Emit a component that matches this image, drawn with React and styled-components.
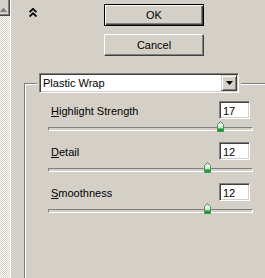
import React from 'react'
import styled, { createGlobalStyle } from 'styled-components'

const GlobalStyle = createGlobalStyle`
  html, body {
    margin: 0;
    padding: 0;
    background: #d4d0c8;
    overflow: hidden;
  }
  body {
    font-family: "Liberation Sans", Arial, sans-serif;
    font-size: 11px;
    color: #000;
  }
`

const Window = styled.div`
  display: flex;
  width: 265px;
  height: 278px;
  overflow: hidden;
  background: #d4d0c8;
`

const Strip = styled.div`
  display: flex;
  flex-direction: column;
  flex: none;
  width: 10px;
  border-right: 1px solid #fff;
  background: repeating-conic-gradient(#fff 0 25%, #d4d0c8 0 50%) 0 0 / 2px 2px;
`

const ScrollButton = styled.div`
  box-sizing: border-box;
  height: 16px;
  background: #d4d0c8;
  border-right: 1px solid #404040;
  border-bottom: 1px solid #404040;
  box-shadow: inset -1px -1px #808080;
  display: flex;
  align-items: flex-start;
  padding-top: 7px;
`

const Main = styled.div`
  display: flex;
  flex-direction: column;
  flex: 1;
  min-width: 0;
`

const TopBar = styled.div`
  display: flex;
  padding: 4px 0 0 18px;
`

const ChevronBox = styled.div`
  width: 75px;
  padding-top: 3px;
`

const ButtonCol = styled.div`
  display: flex;
  flex-direction: column;
  gap: 8px;
  width: 100px;
`

const Button = styled.button`
  box-sizing: border-box;
  height: 22px;
  width: 100px;
  padding: 0;
  font: 11px "Liberation Sans", Arial, sans-serif;
  color: #000;
  background: #d4d0c8;
  border: 1px solid;
  border-color: ${p => (p.$default ? '#000' : '#fff #404040 #404040 #fff')};
  box-shadow: ${p =>
    p.$default
      ? 'inset 1px 1px #fff, inset -1px -1px #404040, inset -2px -2px #808080'
      : 'inset -1px -1px #808080'};
`

const GroupBox = styled.div`
  flex: 1;
  width: 260px;
  margin: 27px 0 0 13px;
  border-top: 1px solid #808080;
  border-left: 1px solid #808080;
  box-shadow: inset 1px 1px #fff;
  display: flex;
  flex-direction: column;
`

const LegendRow = styled.div`
  display: flex;
  margin-top: -11px;
  padding-left: 12px;
`

const LegendWrap = styled.div`
  padding: 0 2px;
  background: #d4d0c8;
`

const Select = styled.div`
  box-sizing: border-box;
  display: flex;
  align-items: center;
  width: 200px;
  height: 20px;
  background: #fff;
  border: 1px solid;
  border-color: #808080 #fff #fff #808080;
  box-shadow: inset 1px 1px #404040, inset -1px -1px #d4d0c8;
`

const SelectText = styled.span`
  flex: 1;
  padding-left: 3px;
  line-height: 13px;
`

const DropButton = styled.div`
  box-sizing: border-box;
  width: 16px;
  height: 16px;
  margin-right: 1px;
  display: flex;
  align-items: center;
  justify-content: center;
  background: #d4d0c8;
  border: 1px solid;
  border-color: #d4d0c8 #404040 #404040 #d4d0c8;
  box-shadow: inset 1px 1px #fff, inset -1px -1px #808080;
`

const Rows = styled.div`
  display: flex;
  flex-direction: column;
  width: 205px;
  margin: 8px 0 0 23px;
`

const Row = styled.div`
  display: flex;
  flex-direction: column;
`

const RowHead = styled.div`
  display: flex;
  justify-content: space-between;
  align-items: flex-end;
  height: 18px;
`

const Label = styled.label`
  padding: 0 0 1px 3px;
  line-height: 13px;
`

const NumInput = styled.input`
  box-sizing: border-box;
  width: 31px;
  height: 18px;
  margin: 0 3px 0 0;
  padding: 2px 3px 0;
  font: 11px "Liberation Sans", Arial, sans-serif;
  color: #000;
  background: #fff;
  border: 1px solid;
  border-color: #808080 #fff #fff #808080;
  box-shadow: inset 1px 1px #404040, inset -1px -1px #d4d0c8;
  outline: none;
`

const Slider = styled.div`
  position: relative;
  height: 23px;
`

const Track = styled.div`
  box-sizing: border-box;
  margin-top: 8px;
  height: 4px;
  border: 1px solid;
  border-color: #808080 #fff #fff #808080;
  border-radius: 1px;
  background: #d4d0c8;
`

const Thumb = styled.svg`
  position: absolute;
  top: 2px;
  width: 7px;
  height: 11px;
`

const Chevrons = () => (
  <svg width="8" height="9" viewBox="0 0 8 9">
    <polyline points="0.6,4.2 4,0.9 7.4,4.2" fill="none" stroke="#000" strokeWidth="1.8" />
    <polyline points="0.6,8.5 4,5.2 7.4,8.5" fill="none" stroke="#000" strokeWidth="1.8" />
  </svg>
)

const params = [
  { key: 'H', rest: 'ighlight Strength', value: 17, min: 0, max: 20 },
  { key: 'D', rest: 'etail', value: 12, min: 1, max: 15 },
  { key: 'S', rest: 'moothness', value: 12, min: 1, max: 15 },
]

const SliderThumb = ({ frac }) => (
  <Thumb
    viewBox="0 0 7 11"
    style={{ left: `calc(3px + ${frac} * (100% - 6px) - 3.5px)` }}
  >
    <defs>
      <linearGradient id="thumbFill" x1="0" y1="0" x2="0" y2="1">
        <stop offset="0" stopColor="#7fd08a" />
        <stop offset="0.35" stopColor="#f4fff4" />
        <stop offset="0.6" stopColor="#b9ecb9" />
        <stop offset="0.75" stopColor="#1faa3a" />
        <stop offset="1" stopColor="#148a2a" />
      </linearGradient>
    </defs>
    <path d="M3.5 0.5 L6.5 3.5 V10.5 H0.5 V3.5 Z" fill="url(#thumbFill)" stroke="#5a8a66" strokeWidth="1" />
  </Thumb>
)

export default function App() {
  return (
    <>
      <GlobalStyle />
      <Window>
        <Strip>
          <ScrollButton>
            <svg width="8" height="5" viewBox="0 0 8 5">
              <polygon points="0,5 3.5,0.5 7,5" fill="#808080" />
            </svg>
          </ScrollButton>
        </Strip>
        <Main>
          <TopBar>
            <ChevronBox>
              <Chevrons />
            </ChevronBox>
            <ButtonCol>
              <Button $default>OK</Button>
              <Button>Cancel</Button>
            </ButtonCol>
          </TopBar>
          <GroupBox>
            <LegendRow>
              <LegendWrap>
                <Select>
                  <SelectText>Plastic Wrap</SelectText>
                  <DropButton>
                    <svg width="7" height="4" viewBox="0 0 7 4">
                      <polygon points="0,0 7,0 3.5,4" fill="#000" />
                    </svg>
                  </DropButton>
                </Select>
              </LegendWrap>
            </LegendRow>
            <Rows>
              {params.map(p => (
                <Row key={p.key}>
                  <RowHead>
                    <Label>
                      <u>{p.key}</u>
                      {p.rest}
                    </Label>
                    <NumInput readOnly value={p.value} />
                  </RowHead>
                  <Slider>
                    <Track />
                    <SliderThumb frac={(p.value - p.min) / (p.max - p.min)} />
                  </Slider>
                </Row>
              ))}
            </Rows>
          </GroupBox>
        </Main>
      </Window>
    </>
  )
}
